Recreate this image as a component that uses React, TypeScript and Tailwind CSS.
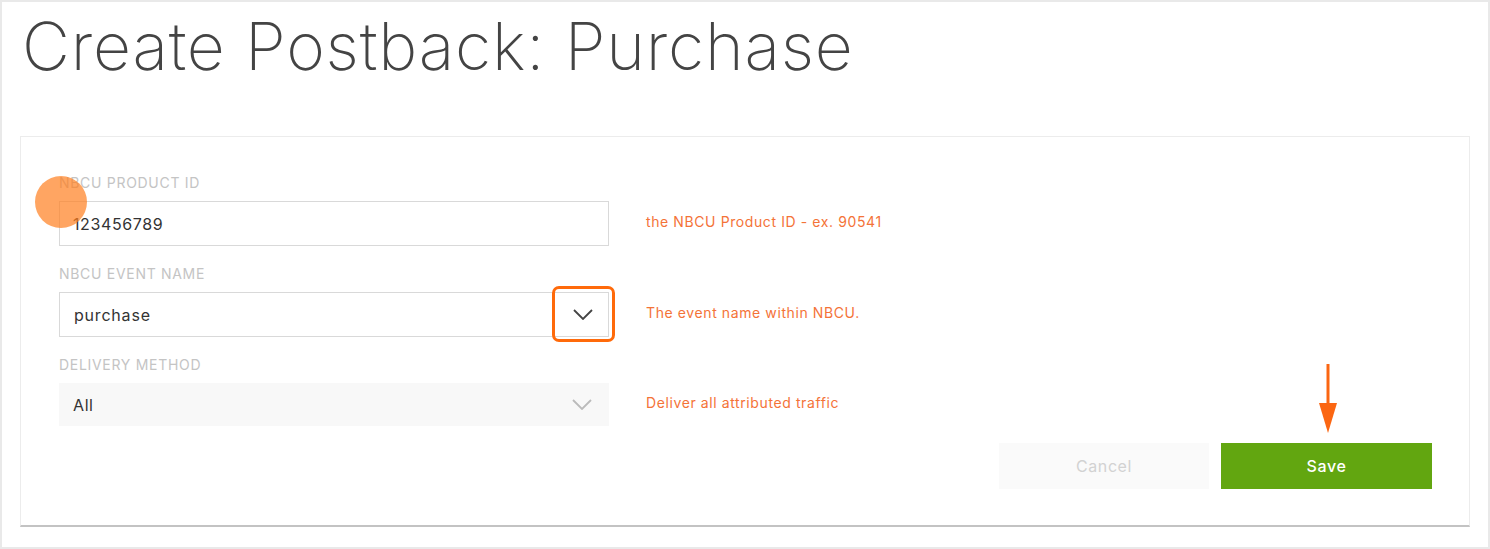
const font = { fontFamily: "Inter, 'Open Sans', sans-serif" };

function Label({ children }: { children: React.ReactNode }) {
  return (
    <div className="h-[18px] text-[14px] leading-[18px] uppercase text-[#c4c4c4] tracking-[0.7px]">
      {children}
    </div>
  );
}

function Help({ children }: { children: React.ReactNode }) {
  return <div className="pb-[5px] text-[14px] text-[#f47338] tracking-[0.6px]">{children}</div>;
}

function Chevron({ color }: { color: string }) {
  return (
    <svg width="20" height="11" viewBox="0 0 20 11" fill="none">
      <polyline points="1,1 10,10 19,1" stroke={color} strokeWidth="1.8" />
    </svg>
  );
}

export default function App() {
  return (
    <div
      className="relative w-[1490px] h-[549px] border-2 border-[#e9e9e9] bg-white overflow-hidden"
      style={font}
    >
      <h1 className="pl-[20px] pt-[6px] h-[134px] text-[66px] leading-[76px] font-extralight text-[#444] tracking-[0.8px]">
        Create Postback: Purchase
      </h1>

      <div className="ml-[18px] w-[1450px] h-[391px] border border-[#ececec] border-b-2 border-b-[#c3c3c3] pt-[37px] pl-[38px] pr-[37px]">
        <div className="flex flex-col gap-[19px]">
          <div className="flex flex-col gap-[9px]">
            <Label>NBCU Product ID</Label>
            <div className="flex items-center gap-[37px]">
              <div className="w-[550px] h-[45px] border border-[#d9d9d9] flex items-center pl-[13px] text-[16px] text-[#333] tracking-[0.6px]">
                123456789
              </div>
              <Help>the NBCU Product ID - ex. 90541</Help>
            </div>
          </div>

          <div className="flex flex-col gap-[9px]">
            <Label>NBCU Event Name</Label>
            <div className="flex items-center gap-[37px]">
              <div className="relative w-[550px] h-[45px] border border-[#d9d9d9] flex items-center justify-between pl-[14px] pr-[15px] text-[16px] text-[#333] tracking-[0.8px]">
                <span>purchase</span>
                <Chevron color="#444" />
                <div className="absolute left-[492px] top-[-7px] w-[63px] h-[56px] rounded-[7px] border-[3px] border-[#ff6a0a]" />
              </div>
              <Help>The event name within NBCU.</Help>
            </div>
          </div>

          <div className="flex flex-col gap-[9px]">
            <Label>Delivery Method</Label>
            <div className="flex items-center gap-[37px]">
              <div className="w-[550px] h-[43px] bg-[#f8f8f8] flex items-center justify-between pl-[14px] pr-[17px] text-[16px] text-[#333] tracking-[0.6px]">
                <span>All</span>
                <Chevron color="#bbbbbb" />
              </div>
              <Help>Deliver all attributed traffic</Help>
            </div>
          </div>
        </div>

        <div className="flex justify-end gap-[12px] mt-[17px]">
          <button className="w-[210px] h-[46px] bg-[#fafafa] text-[16px] text-[#d2d2d2] tracking-[0.6px]">
            Cancel
          </button>
          <button className="w-[211px] h-[46px] bg-[#62a610] text-[16px] font-medium text-white tracking-[0.6px]">
            Save
          </button>
        </div>
      </div>

      {/* click marker */}
      <div className="absolute left-[33px] top-[174px] w-[52px] h-[52px] rounded-full bg-[#ff7f20]/70" />

      {/* arrow */}
      <svg className="absolute left-[1314px] top-[361px]" width="24" height="72" viewBox="0 0 24 72">
        <line x1="12" y1="1" x2="12" y2="44" stroke="#fb6612" strokeWidth="3" />
        <polygon points="3,40 21,40 12,70" fill="#fb6612" />
      </svg>
    </div>
  );
}
